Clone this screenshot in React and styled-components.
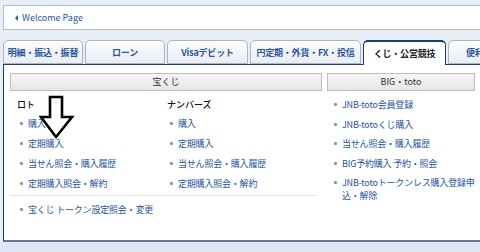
import styled, { createGlobalStyle } from "styled-components"

const GlobalStyle = createGlobalStyle`
  html, body {
    margin: 0;
    padding: 0;
    background: #e8eef6;
    overflow: hidden;
  }
  body {
    font-family: "Noto Sans CJK JP", "Liberation Sans", sans-serif;
    font-size: 9px;
  }
`

const tabs = [
    { label: "明細・振込・振替", w: 80 },
    { label: "ローン", w: 80 },
    { label: "Visaデビット", w: 81 },
    { label: "円定期・外貨・FX・投信", w: 111 },
    { label: "くじ・公営競技", w: 83, active: true },
    { label: "便利な機能", w: 80 },
]

const lotoLinks = ["購入", "定期購入", "当せん照会・購入履歴", "定期購入照会・解約"]
const numbersLinks = ["購入", "定期購入", "当せん照会・購入履歴", "定期購入照会・解約"]

const App = () => {
    return (
        <>
            <GlobalStyle />
            <Page>
                <Wrap>
                    <WelcomeBar>
                        <Caret />
                        <span>Welcome Page</span>
                    </WelcomeBar>

                    <TabRow>
                        {tabs.map((t) => (
                            <Tab key={t.label} $w={t.w} $active={t.active}>
                                {t.label}
                            </Tab>
                        ))}
                    </TabRow>

                    <Panel>
                        <Section $w={312}>
                            <SectionHead>宝くじ</SectionHead>
                            <Columns>
                                <Column $w={150}>
                                    <Heading>ロト</Heading>
                                    <LinkList>
                                        {lotoLinks.map((l) => (
                                            <Item key={l}>
                                                <Dot />
                                                <span>{l}</span>
                                            </Item>
                                        ))}
                                    </LinkList>
                                </Column>
                                <Column $w={140}>
                                    <Heading>ナンバーズ</Heading>
                                    <LinkList>
                                        {numbersLinks.map((l) => (
                                            <Item key={l}>
                                                <Dot />
                                                <span>{l}</span>
                                            </Item>
                                        ))}
                                    </LinkList>
                                </Column>
                            </Columns>
                            <Divider />
                            <BottomItem>
                                <Dot />
                                <span>宝くじ トークン設定照会・変更</span>
                            </BottomItem>
                        </Section>

                        <Section $w={148}>
                            <SectionHead>BIG・toto</SectionHead>
                            <TotoList>
                                <Item>
                                    <Dot />
                                    <span>JNB-toto会員登録</span>
                                </Item>
                                <Item>
                                    <Dot />
                                    <span>JNB-totoくじ購入</span>
                                </Item>
                                <Item>
                                    <Dot />
                                    <span>当せん照会・購入履歴</span>
                                </Item>
                                <Item>
                                    <Dot />
                                    <span>BIG予約購入 予約・照会</span>
                                </Item>
                                <Item>
                                    <Dot />
                                    <span>
                                        JNB-totoトークンレス購入登録申
                                        <br />
                                        込・解除
                                    </span>
                                </Item>
                            </TotoList>
                        </Section>

                        <Arrow viewBox="0 0 36 45" width="36" height="45">
                            <polygon
                                points="11,2 23,2 23,22 33,22 17,42 2,22 11,22"
                                fill="#fff"
                                stroke="#000"
                                strokeWidth="2.6"
                                strokeLinejoin="miter"
                            />
                        </Arrow>
                    </Panel>
                </Wrap>
                <Footer />
            </Page>
        </>
    )
}

export default App

const Page = styled.div`
    width: 500px;
    padding-top: 5px;
`

const Wrap = styled.div`
    padding-left: 3px;
`

const WelcomeBar = styled.div`
    display: flex;
    align-items: center;
    gap: 4px;
    height: 23px;
    padding-left: 11px;
    background: #fff;
    border: 1px solid #b4bcc8;
    border-right: none;
    color: #2a58a6;
    font-size: 9px;
`

const Caret = styled.i`
    width: 0;
    height: 0;
    border-top: 3px solid transparent;
    border-bottom: 3px solid transparent;
    border-right: 3px solid #2a58a6;
`

const TabRow = styled.div`
    display: flex;
    align-items: flex-end;
    gap: 2px;
    margin-top: 10px;
    height: 24px;
`

const Tab = styled.div`
    position: relative;
    z-index: 1;
    flex: none;
    box-sizing: border-box;
    width: ${(p) => p.$w}px;
    height: ${(p) => (p.$active ? 25 : 24)}px;
    margin-bottom: ${(p) => (p.$active ? -1 : 0)}px;
    display: flex;
    align-items: center;
    justify-content: center;
    border: 1px solid ${(p) => (p.$active ? "#1f3b78" : "#aab4c3")};
    border-top-width: ${(p) => (p.$active ? 2 : 1)}px;
    border-bottom: ${(p) => (p.$active ? "none" : "1px solid #aab4c3")};
    border-radius: 5px 5px 0 0;
    background: ${(p) =>
        p.$active ? "#fff" : "linear-gradient(#fbfcfd, #e9edf2)"};
    color: ${(p) => (p.$active ? "#222" : "#2a57a4")};
    font-weight: bold;
    font-size: 9px;
    letter-spacing: -0.2px;
    white-space: nowrap;
    overflow: hidden;
`

const Panel = styled.div`
    position: relative;
    display: flex;
    gap: 5px;
    height: 167px;
    padding: 8px 0 0 6px;
    background: #fff;
    border: 1px solid #1f3b78;
    border-right: none;
    border-bottom: 2px solid #66789a;
`

const Section = styled.div`
    flex: none;
    width: ${(p) => p.$w}px;
    display: flex;
    flex-direction: column;
`

const SectionHead = styled.div`
    height: 16px;
    line-height: 16px;
    text-align: center;
    border: 1px solid #bdbdbd;
    background: linear-gradient(#f6f6f6, #e6e6e6);
    color: #333;
    font-size: 9px;
`

const Columns = styled.div`
    display: flex;
    padding: 7px 0 0 7px;
`

const Column = styled.div`
    width: ${(p) => p.$w}px;
`

const Heading = styled.div`
    height: 13px;
    line-height: 13px;
    color: #111;
    font-weight: 500;
    font-size: 9px;
`

const LinkList = styled.div`
    display: flex;
    flex-direction: column;
    gap: 7px;
    padding-top: 5.5px;
    padding-left: 3px;
`

const TotoList = styled.div`
    display: flex;
    flex-direction: column;
    gap: 6.5px;
    padding: 7px 0 0 7px;
`

const Item = styled.div`
    display: flex;
    align-items: flex-start;
    gap: 5px;
    line-height: 13px;
    color: #2553a2;
    font-size: 9px;
    letter-spacing: -0.2px;
    white-space: nowrap;
`

const Dot = styled.i`
    flex: none;
    width: 3px;
    height: 3px;
    margin-top: 5px;
    background: #959595;
    border-radius: 1px;
`

const Divider = styled.div`
    height: 1px;
    margin: 5px 6px 0 0;
    background: #e2e2e2;
`

const BottomItem = styled(Item)`
    padding: 7px 0 0 10px;
`

const Arrow = styled.svg`
    position: absolute;
    left: 35px;
    top: 30px;
`

const Footer = styled.div`
    height: 10px;
    background: #dfe8f4;
    border-bottom: 2px solid #1c2f66;
`
